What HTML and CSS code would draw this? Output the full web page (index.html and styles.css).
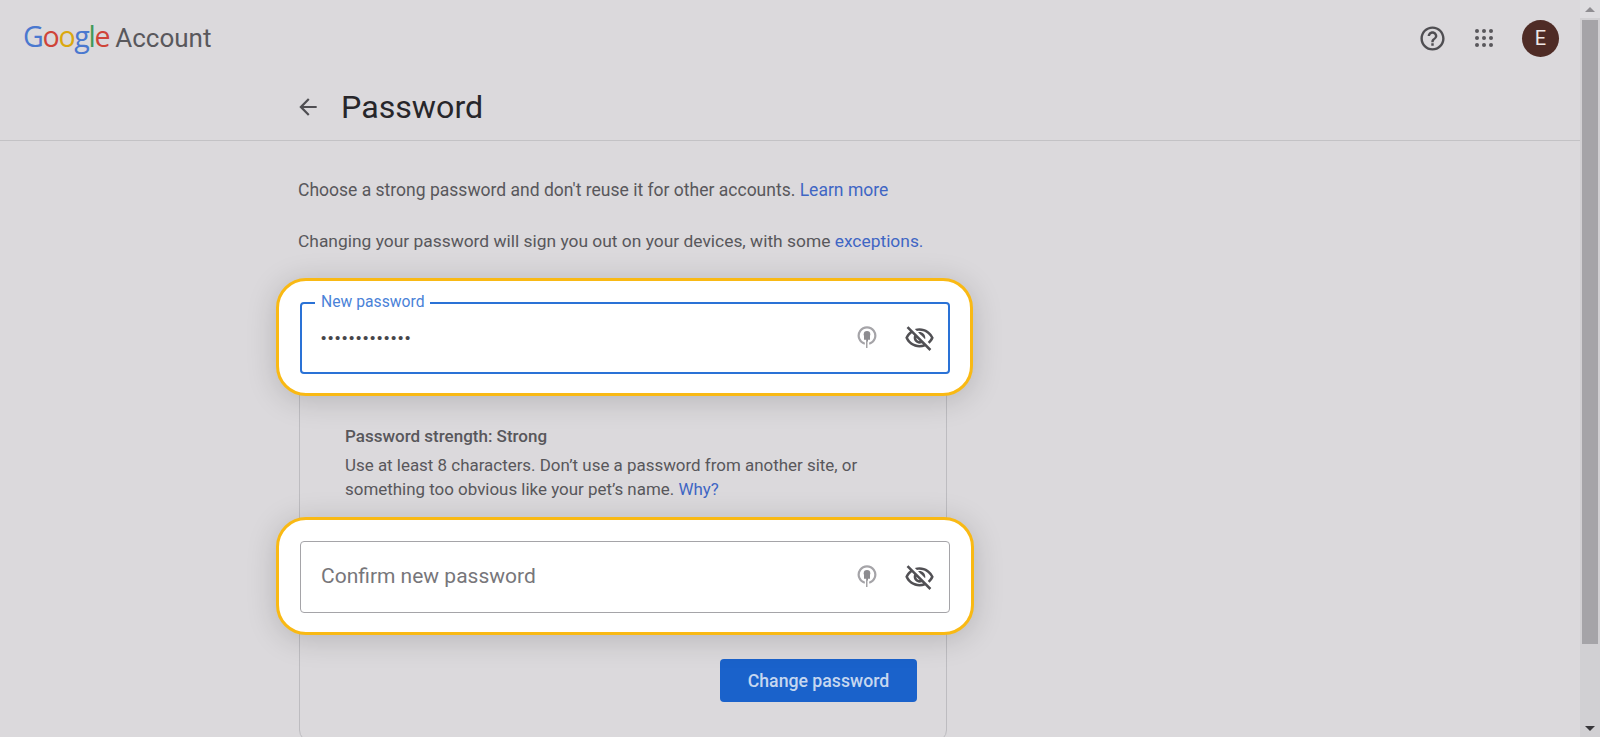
FILE: index.html
```html
<!DOCTYPE html>
<html lang="en">
<head>
<meta charset="utf-8">
<title>Password</title>
<link rel="stylesheet" href="styles.css">
</head>
<body>
<div class="app">
  <main class="page">
    <header class="topbar">
      <div class="brand">
        <span class="logo"><span class="b">G</span><span class="r">o</span><span class="y">o</span><span class="b">g</span><span class="g">l</span><span class="r">e</span></span>
        <span class="product">Account</span>
      </div>
      <div class="actions">
        <svg class="help" viewBox="0 0 24 24"><path d="M12 2C6.48 2 2 6.48 2 12s4.48 10 10 10 10-4.48 10-10S17.52 2 12 2zm0 18c-4.41 0-8-3.59-8-8s3.59-8 8-8 8 3.59 8 8-3.59 8-8 8zm-1-4h2v2h-2zm1-10c-2.21 0-4 1.79-4 4h2c0-1.1.9-2 2-2s2 .9 2 2c0 2-3 1.75-3 5h2c0-2.25 3-2.5 3-5 0-2.21-1.79-4-4-4z"/></svg>
        <svg class="apps" viewBox="0 0 20 20"><circle cx="3" cy="3" r="2"/><circle cx="10" cy="3" r="2"/><circle cx="17" cy="3" r="2"/><circle cx="3" cy="10" r="2"/><circle cx="10" cy="10" r="2"/><circle cx="17" cy="10" r="2"/><circle cx="3" cy="17" r="2"/><circle cx="10" cy="17" r="2"/><circle cx="17" cy="17" r="2"/></svg>
        <span class="avatar">E</span>
      </div>
    </header>
    <div class="titlebar">
      <svg class="back" viewBox="0 0 24 24"><path d="M20 11H7.83l5.59-5.59L12 4l-8 8 8 8 1.41-1.41L7.83 13H20v-2z"/></svg>
      <h1>Password</h1>
    </div>
    <section class="content">
      <p class="intro lead">Choose a strong password and don't reuse it for other accounts. <a href="#">Learn more</a></p>
      <p class="intro second">Changing your password will sign you out on your devices, with some <a href="#">exceptions.</a></p>

      <div class="spot first-spot">
        <div class="field active">
          <span class="label">New password</span>
          <span class="dots">•••••••••••••</span>
          <svg class="key" viewBox="0 0 20 24"><path class="ring" d="M7.8 18.7A8.3 8.3 0 1 1 12.2 18.7"/><circle class="cap" cx="10" cy="9.3" r="3.3"/><path class="cap" d="M7 9.5h6v5.3h-2v1.6h-.6V23H9.2v-8.2H7z"/></svg>
          <svg class="eye" viewBox="0 0 24 24"><path d="M12 6c3.79 0 7.17 2.13 8.82 5.5-.59 1.22-1.42 2.27-2.41 3.12l1.41 1.41c1.39-1.23 2.49-2.77 3.18-4.53C21.27 7.11 17 4 12 4c-1.27 0-2.49.2-3.64.57l1.65 1.65C10.66 6.09 11.32 6 12 6zm-1.07 1.14L13 9.21c.57.25 1.03.71 1.28 1.28l2.07 2.07c.08-.34.14-.7.14-1.07C16.5 9.01 14.48 7 12 7c-.37 0-.72.05-1.07.14zM2.01 3.87l2.68 2.68C3.06 7.83 1.78 9.53 1 11.5 2.73 15.89 7 19 12 19c1.52 0 2.98-.29 4.32-.82l3.42 3.42 1.41-1.41L3.42 2.45 2.01 3.87zm7.5 7.5l2.61 2.61c-.04.01-.08.02-.12.02-1.38 0-2.5-1.12-2.5-2.5 0-.05.01-.08.01-.13zm-3.4-3.4l1.75 1.75c-.23.55-.36 1.15-.36 1.78 0 2.48 2.02 4.5 4.5 4.5.63 0 1.23-.13 1.77-.36l.98.98c-.88.24-1.8.38-2.75.38-3.79 0-7.17-2.13-8.82-5.5.7-1.43 1.72-2.61 2.93-3.53z"/></svg>
        </div>
      </div>

      <div class="card">
        <div class="hint">
          <h2>Password strength: Strong</h2>
          <p>Use at least 8 characters. Don’t use a password from another site, or<br>something too obvious like your pet’s name. <a href="#">Why?</a></p>
        </div>
        <div class="spot second-spot">
          <div class="field">
            <span class="placeholder">Confirm new password</span>
            <svg class="key" viewBox="0 0 20 24"><path class="ring" d="M7.8 18.7A8.3 8.3 0 1 1 12.2 18.7"/><circle class="cap" cx="10" cy="9.3" r="3.3"/><path class="cap" d="M7 9.5h6v5.3h-2v1.6h-.6V23H9.2v-8.2H7z"/></svg>
            <svg class="eye" viewBox="0 0 24 24"><path d="M12 6c3.79 0 7.17 2.13 8.82 5.5-.59 1.22-1.42 2.27-2.41 3.12l1.41 1.41c1.39-1.23 2.49-2.77 3.18-4.53C21.27 7.11 17 4 12 4c-1.27 0-2.49.2-3.64.57l1.65 1.65C10.66 6.09 11.32 6 12 6zm-1.07 1.14L13 9.21c.57.25 1.03.71 1.28 1.28l2.07 2.07c.08-.34.14-.7.14-1.07C16.5 9.01 14.48 7 12 7c-.37 0-.72.05-1.07.14zM2.01 3.87l2.68 2.68C3.06 7.83 1.78 9.53 1 11.5 2.73 15.89 7 19 12 19c1.52 0 2.98-.29 4.32-.82l3.42 3.42 1.41-1.41L3.42 2.45 2.01 3.87zm7.5 7.5l2.61 2.61c-.04.01-.08.02-.12.02-1.38 0-2.5-1.12-2.5-2.5 0-.05.01-.08.01-.13zm-3.4-3.4l1.75 1.75c-.23.55-.36 1.15-.36 1.78 0 2.48 2.02 4.5 4.5 4.5.63 0 1.23-.13 1.77-.36l.98.98c-.88.24-1.8.38-2.75.38-3.79 0-7.17-2.13-8.82-5.5.7-1.43 1.72-2.61 2.93-3.53z"/></svg>
          </div>
        </div>
        <div class="submit"><button type="button">Change password</button></div>
      </div>
    </section>
  </main>
  <aside class="scrollbar">
    <span class="step top"><span class="arrow up"></span></span>
    <span class="track"><span class="thumb"></span></span>
    <span class="step"><span class="arrow down"></span></span>
  </aside>
</div>
</body>
</html>
```
FILE: styles.css
```css
* { box-sizing: border-box; }
html, body { margin: 0; height: 100%; overflow: hidden; }
body { background: #dbd9dc; color: #4f4e52; font-family: Roboto, "Liberation Sans", sans-serif; }
.app { display: flex; height: 737px; }
.page { flex: 1; min-width: 0; overflow: hidden; }

.topbar { display: flex; align-items: center; justify-content: space-between; height: 76px; padding: 0 21px 0 23px; }
.brand { display: flex; align-items: baseline; gap: 6px; margin-top: -2px; }
.logo { font-family: "Open Sans", sans-serif; font-size: 28.6px; font-weight: 500; letter-spacing: -1.3px; line-height: 32px; }
.b { color: #4a78cf; } .r { color: #cf4438; } .y { color: #dba80f; } .g { color: #3f9a58; }
.product { font-size: 26px; color: #59585c; line-height: 32px; }
.actions { display: flex; align-items: center; }
.help { width: 29px; height: 29px; fill: #4f4e52; margin-right: 27px; }
.apps { width: 20px; height: 20px; fill: #59585c; margin-right: 28px; }
.avatar { width: 37px; height: 37px; border-radius: 50%; background: #4f2c26; color: #efe8e6; display: flex; align-items: center; justify-content: center; font-size: 20px; }

.titlebar { display: flex; align-items: center; height: 65px; padding: 0 0 2px 295px; border-bottom: 1px solid #c3c2c5; }
.back { width: 26px; height: 26px; fill: #4f4e52; margin-right: 20px; }
h1 { margin: 0; font-size: 32.2px; font-weight: 400; color: #27262a; line-height: 40px; }

.content { width: 649px; margin-left: 298px; }
.intro { margin: 0; font-size: 17.4px; line-height: 22px; color: #58575b; white-space: nowrap; }
.lead { font-size: 17.52px; padding-top: 38px; }
.second { margin-top: 29px; }
a { color: #3f66c4; text-decoration: none; }

.spot { position: relative; z-index: 1; margin: 0 -26px 0 -22px; padding: 21px 20px 19px 21px; background: #fff; border: 3px solid #f9b914; border-radius: 30px; box-shadow: 0 4px 30px rgba(0, 0, 0, .17); }
.first-spot { margin-top: 26px; }
.second-spot { margin-top: 16px; }

.field { position: relative; display: flex; align-items: center; height: 72px; padding: 0 14px 0 20px; border: 1px solid #a5a4a8; border-radius: 4px; background: #fff; }
.field.active { border: 2px solid #2a72d6; padding-left: 19px; padding-right: 13px; }
.label { position: absolute; top: -10px; left: 13px; padding: 0 6px; background: #fff; color: #4a82d8; font-size: 15.7px; line-height: 16px; }
.dots { flex: 1; font-family: "Liberation Sans", sans-serif; font-size: 15px; letter-spacing: 1.75px; color: #47464a; line-height: 20px; }
.placeholder { flex: 1; font-size: 21px; color: #77767a; padding-bottom: 2px; }
.key { width: 20px; height: 24px; margin: -2px 27px 0 0; flex: none; }
.ring { fill: none; stroke: #a5a4a8; stroke-width: 2.2; }
.cap { fill: #8d8c90; }
.eye { width: 31px; height: 31px; fill: #515054; flex: none; }

.card { margin: -26px 0 0 1px; height: 372px; padding: 54px 29px 0 45px; border: 1px solid #bdbcc0; border-radius: 12px; }
.hint h2 { margin: 0 0 6px; font-size: 17px; font-weight: 500; line-height: 22px; color: #58575b; }
.hint p { margin: 0; font-size: 16.93px; line-height: 24px; color: #58575b; }
.card .spot { margin-left: -69px; margin-right: -57px; padding-right: 21px; }
.submit { display: flex; justify-content: flex-end; margin-top: 24px; }
button { width: 197px; height: 43px; border: 0; border-radius: 4px; background: #1a62cb; color: #c6d7f0; font: 500 17.7px Roboto, sans-serif; }

.scrollbar { flex: none; width: 20px; display: flex; flex-direction: column; background: #d1d0d3; }
.step { flex: none; height: 18px; display: flex; align-items: center; justify-content: center; }
.step.top { background: #dedde0; }
.arrow { width: 0; height: 0; border-left: 5px solid transparent; border-right: 5px solid transparent; }
.arrow.up { border-bottom: 5px solid #8f8e92; }
.arrow.down { border-top: 5px solid #38373a; }
.track { flex: 1; min-height: 0; padding: 2px 2px 0; }
.thumb { display: block; height: 624px; background: #a5a4a8; }
```
